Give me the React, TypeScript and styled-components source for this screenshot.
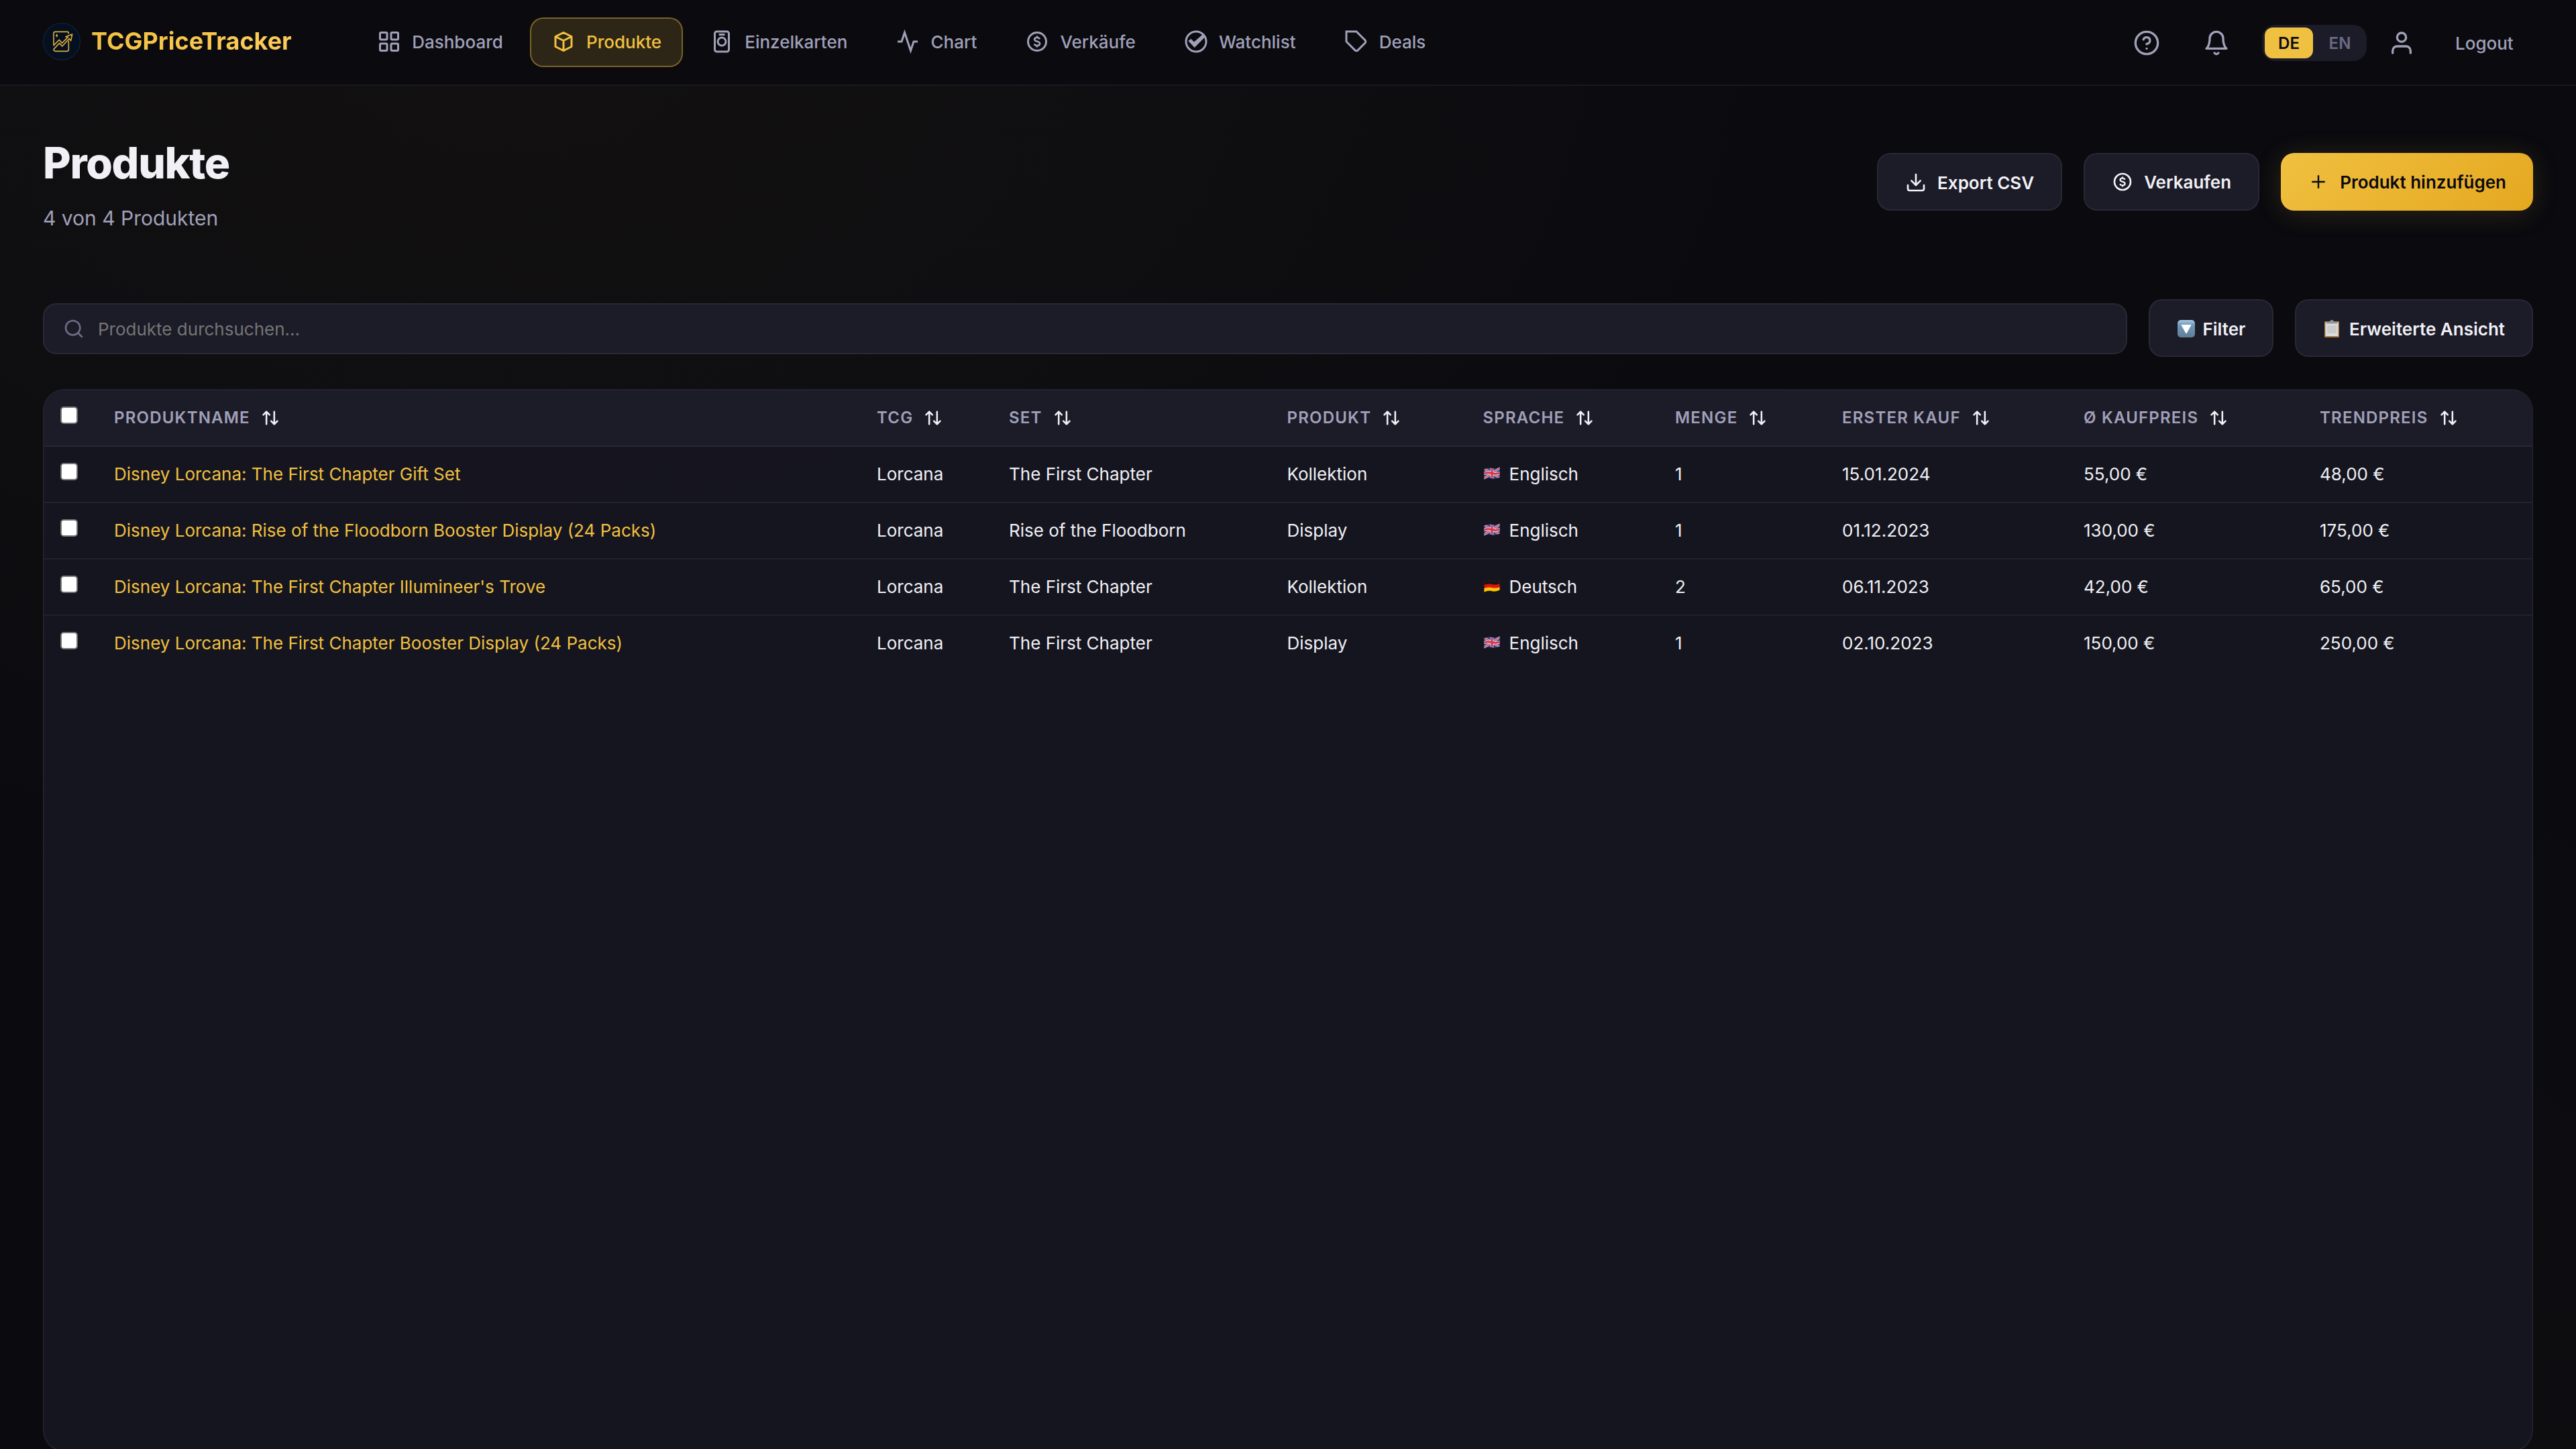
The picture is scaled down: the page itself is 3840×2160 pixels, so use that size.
import type { ReactNode } from "react";
import { createGlobalStyle, styled } from "styled-components";
import { FiActivity, FiBell, FiDownload, FiHelpCircle, FiSearch, FiUser } from "react-icons/fi";

const GlobalStyle = createGlobalStyle`
  * {
    box-sizing: border-box;
  }

  body {
    margin: 0;
    height: 100vh;
    overflow: hidden;
    font-family: Inter, "Liberation Sans", sans-serif;
    color: #f0f0f5;
    -webkit-font-smoothing: antialiased;
    background-color: #0a0a0f;
    background-image: radial-gradient(ellipse at 20% 0%, rgba(240, 192, 64, 0.04) 0%, transparent 50%),
      radial-gradient(ellipse at 80% 100%, rgba(240, 192, 64, 0.02) 0%, transparent 50%);
  }

  #root {
    height: 100%;
  }
`;

const Header = styled.header`
  display: flex;
  align-items: center;
  height: 128px;
  padding: 0 64px;
  background: rgba(10, 10, 15, 0.8);
  border-bottom: 2px solid rgba(255, 255, 255, 0.06);
`;

const Brand = styled.div`
  display: flex;
  align-items: center;
  gap: 16px;
  width: 466px;
  margin-top: -2px;
`;

const BrandLogo = styled.svg`
  width: 56px;
  height: 56px;
`;

const BrandName = styled.span`
  margin-top: -2px;
  font-size: 36px;
  font-weight: 700;
  color: transparent;
  background: linear-gradient(135deg, #f0c040, #ffcc5c);
  background-clip: text;
`;

const Nav = styled.nav`
  display: flex;
  gap: 8px;
`;

const NavItem = styled.a<{ $active?: boolean }>`
  display: flex;
  align-items: center;
  gap: 16.2px;
  height: 74px;
  padding: 0 30px 2px;
  font-size: 26px;
  font-weight: 500;
  border-radius: 20px;
  border: 2px solid ${({ $active }) => ($active ? "rgba(240, 192, 64, 0.4)" : "transparent")};
  background: ${({ $active }) => ($active ? "rgba(240, 192, 64, 0.15)" : "transparent")};
  color: ${({ $active }) => ($active ? "#f0c040" : "#a0a0b8")};

  svg {
    width: 36px;
    height: 36px;
  }
`;

const Actions = styled.div`
  display: flex;
  align-items: center;
  margin-left: auto;
  padding-top: 2px;
  color: #a0a0b8;
`;

const IconButton = styled.div<{ $width: number }>`
  display: flex;
  justify-content: center;
  width: ${({ $width }) => $width}px;

  svg {
    width: 40px;
    height: 40px;
  }
`;

const LangSwitch = styled.div`
  display: flex;
  gap: 4px;
  margin-left: 16px;
  padding: 4px;
  border-radius: 20px;
  background: #1c1b28;
`;

const Lang = styled.span<{ $active?: boolean }>`
  display: flex;
  align-items: center;
  justify-content: center;
  width: 72px;
  height: 46px;
  border-radius: 12px;
  font-size: 24px;
  font-weight: 600;
  background: ${({ $active }) => ($active ? "#f0c040" : "transparent")};
  color: ${({ $active }) => ($active ? "#0a0a0f" : "#6b6b85")};
`;

const Logout = styled.span`
  margin-left: 28px;
  padding-top: 1px;
  width: 116px;
  font-size: 26px;
  font-weight: 500;
`;

const Main = styled.main`
  padding: 0 64px;
`;

const PageHead = styled.div`
  display: flex;
  align-items: flex-start;
  justify-content: space-between;
  height: 318px;
  padding-top: 79px;
`;

const Title = styled.h1`
  margin: 0;
  font-size: 64px;
  line-height: 72px;
  font-weight: 800;
  letter-spacing: -0.02em;
`;

const Subtitle = styled.p`
  margin: 18px 0 0;
  font-size: 30px;
  line-height: 56px;
  color: #a0a0b8;
`;

const ButtonRow = styled.div`
  display: flex;
  gap: 32px;
  padding-top: 21px;
`;

const Button = styled.button<{ $primary?: boolean; $tight?: boolean; $low?: boolean }>`
  display: flex;
  align-items: center;
  gap: ${({ $tight }) => ($tight ? 6.6 : 16)}px;
  height: 86px;
  padding: ${({ $low }) => ($low ? "3px 40px 0" : "0 40px")};
  border-radius: 20px;
  border: ${({ $primary }) => ($primary ? "none" : "2px solid rgba(255, 255, 255, 0.06)")};
  background: ${({ $primary }) => ($primary ? "linear-gradient(135deg, #f0c040, #e5a820)" : "#1c1b28")};
  box-shadow: ${({ $primary }) => ($primary ? "0 4px 40px rgba(240, 192, 64, 0.15)" : "none")};
  color: ${({ $primary }) => ($primary ? "#0a0a0f" : "#f0f0f5")};
  font-family: inherit;
  font-size: 26px;
  font-weight: 600;
  white-space: nowrap;

  svg {
    flex: none;
    width: 32px;
    height: 32px;
    margin-top: ${({ $low }) => ($low ? -1 : 0)}px;
  }
`;

const Toolbar = styled.div`
  display: flex;
  align-items: center;
  gap: 32px;
`;

const SearchBox = styled.div`
  flex: 1;
  display: flex;
  align-items: center;
  gap: 20px;
  height: 76px;
  margin-top: 2px;
  padding: 0 28px;
  border-radius: 20px;
  border: 2px solid rgba(255, 255, 255, 0.06);
  background: #1c1b28;
  color: #6b6b85;

  svg {
    width: 32px;
    height: 32px;
  }
`;

const SearchInput = styled.input`
  flex: 1;
  padding: 0;
  border: none;
  outline: none;
  background: none;
  color: #f0f0f5;
  font-family: inherit;
  font-size: 26px;

  &::placeholder {
    color: #757575;
  }
`;

const Card = styled.section`
  margin-top: 48px;
  height: 1584px;
  overflow: hidden;
  border-radius: 32px;
  border: 2px solid rgba(255, 255, 255, 0.06);
  background: rgba(24, 24, 35, 0.8);
`;

const Table = styled.table`
  width: 100%;
  table-layout: fixed;
  border-collapse: separate;
  border-spacing: 0;
  font-size: 26px;
`;

const Th = styled.th<{ $width?: number }>`
  width: ${({ $width }) => ($width ? `${$width}px` : "auto")};
  height: 84px;
  padding: 0 24px 2px;
  text-align: left;
  font-size: 24px;
  font-weight: 600;
  letter-spacing: 0.05em;
  text-transform: uppercase;
  white-space: nowrap;
  color: #a0a0b8;
  background: #1c1b28;
  border-bottom: 2px solid rgba(255, 255, 255, 0.06);
`;

const Td = styled.td`
  height: 84px;
  padding: 0 24px 2px;
  white-space: nowrap;
  border-bottom: 2px solid rgba(255, 255, 255, 0.06);

  tr:last-child > & {
    border-bottom-color: transparent;
  }
`;

const ThLabel = styled.div`
  display: flex;
  align-items: center;
  gap: 16px;

  svg {
    width: 28px;
    height: 28px;
    margin-top: 2px;
    color: #f0f0f5;
  }
`;

const Check = styled.input.attrs({ type: "checkbox" })`
  appearance: none;
  display: block;
  width: 26px;
  height: 26px;
  margin: 0 0 6px;
  border: 2px solid #767676;
  border-radius: 5px;
  background: #fff;
`;

const ProductLink = styled.a`
  color: #f0c040;
`;

const Language = styled.span`
  display: flex;
  align-items: center;
  gap: 13px;
`;

const FlagIcon = styled.svg`
  width: 26px;
  height: 20px;
`;

const columns = [
  { label: "Produktname", width: 1137 },
  { label: "TCG", width: 197 },
  { label: "Set", width: 414.5 },
  { label: "Produkt", width: 292 },
  { label: "Sprache", width: 286.5 },
  { label: "Menge", width: 249 },
  { label: "Erster Kauf", width: 360 },
  { label: "Ø Kaufpreis", width: 352 },
  { label: "Trendpreis" },
];

const products = [
  {
    name: "Disney Lorcana: The First Chapter Gift Set",
    set: "The First Chapter",
    type: "Kollektion",
    language: "Englisch",
    amount: 1,
    bought: "15.01.2024",
    price: "55,00 €",
    trend: "48,00 €",
  },
  {
    name: "Disney Lorcana: Rise of the Floodborn Booster Display (24 Packs)",
    set: "Rise of the Floodborn",
    type: "Display",
    language: "Englisch",
    amount: 1,
    bought: "01.12.2023",
    price: "130,00 €",
    trend: "175,00 €",
  },
  {
    name: "Disney Lorcana: The First Chapter Illumineer's Trove",
    set: "The First Chapter",
    type: "Kollektion",
    language: "Deutsch",
    amount: 2,
    bought: "06.11.2023",
    price: "42,00 €",
    trend: "65,00 €",
  },
  {
    name: "Disney Lorcana: The First Chapter Booster Display (24 Packs)",
    set: "The First Chapter",
    type: "Display",
    language: "Englisch",
    amount: 1,
    bought: "02.10.2023",
    price: "150,00 €",
    trend: "250,00 €",
  },
];

const Icon = ({ children, stroke = 2 }: { children: ReactNode; stroke?: number }) => (
  <svg viewBox="0 0 24 24" fill="none" stroke="currentColor" strokeWidth={stroke}>
    {children}
  </svg>
);

const GridIcon = () => (
  <Icon>
    <rect x="3" y="3" width="7" height="7" rx="1" />
    <rect x="14" y="3" width="7" height="7" rx="1" />
    <rect x="3" y="14" width="7" height="7" rx="1" />
    <rect x="14" y="14" width="7" height="7" rx="1" />
  </Icon>
);

const CubeIcon = () => (
  <Icon>
    <path
      strokeLinecap="round"
      strokeLinejoin="round"
      d="M20 7l-8-4-8 4m16 0l-8 4m8-4v10l-8 4m0-10L4 7m8 4v10M4 7v10l8 4"
    />
  </Icon>
);

const CardIcon = () => (
  <Icon>
    <rect x="5" y="2" width="14" height="20" rx="2" />
    <path d="M9 5h6" />
    <circle cx="12" cy="12" r="4" />
  </Icon>
);

const CoinIcon = () => (
  <Icon>
    <circle cx="12" cy="12" r="9" />
    <path
      strokeWidth="1.7"
      d="M14.6 9.6c-.4-1-1.4-1.6-2.6-1.6-1.5 0-2.6.8-2.6 1.9 0 2.7 5.3 1.3 5.3 4.1 0 1.2-1.2 2-2.7 2-1.4 0-2.4-.6-2.8-1.7M12 6.3v2M12 15.6v2"
    />
  </Icon>
);

const CheckCircleIcon = () => (
  <Icon>
    <circle cx="12" cy="12" r="10" />
    <path
      stroke="none"
      fill="currentColor"
      d="M4.2 11.3 6.9 9.3 10 12.4 18.7 4.7 21.5 6.9 10.4 18z"
    />
  </Icon>
);

const TagIcon = () => (
  <Icon>
    <path d="M20.59 13.41l-7.17 7.17a2 2 0 0 1-2.83 0L2 12V2h10l8.59 8.59a2 2 0 0 1 0 2.82z" />
  </Icon>
);

const PlusIcon = () => (
  <Icon stroke={1.8}>
    <path d="M12 4.7v14.6M4.7 12h14.6" />
  </Icon>
);

const SortIcon = () => (
  <Icon stroke={2.2}>
    <path strokeLinecap="round" strokeLinejoin="round" d="M3 8l4-4 4 4M7 4v16M21 16l-4 4-4-4M17 20V4" />
  </Icon>
);

const Logo = () => (
  <BrandLogo viewBox="72 42 168 168" fill="none">
    <circle cx="156" cy="126" r="82" fill="#04101f" stroke="#12213a" strokeWidth="4" />
    <g stroke="#d9ab3c" strokeWidth="5" strokeLinejoin="round" strokeLinecap="round">
      <path d="M187 90v-2q0-6-6-6h-54q-7 0-7 7v54l25-25 12 15 27-27-10-2 29-11-6 29-7-9-32 34-12-14-26 27q0 9 8 9h51q8 0 8-8v-36" />
    </g>
    <path d="M134 91l5 8-5 8-5-8z" fill="#d9ab3c" />
  </BrandLogo>
);

const FilterEmoji = () => (
  <svg viewBox="2 0 32 32">
    <defs>
      <linearGradient id="filterFace" x1="0" y1="0" x2="0" y2="1">
        <stop offset="0" stopColor="#a9cbe2" />
        <stop offset="0.3" stopColor="#7097b8" />
        <stop offset="1" stopColor="#5f7e97" />
      </linearGradient>
    </defs>
    <rect x="3" y="3" width="26" height="26" rx="5" fill="url(#filterFace)" />
    <path d="M9 10.5h14L16 23z" fill="#fff" stroke="#fff" strokeLinejoin="round" />
  </svg>
);

const ClipboardEmoji = () => (
  <svg viewBox="3 0 32 32">
    <rect x="5" y="5" width="22" height="24" rx="1" fill="#a87838" />
    <rect x="6.5" y="6.5" width="19" height="20.5" fill="#dedede" />
    <rect x="9" y="11" width="14" height="12" fill="#cbcbcb" />
    <path d="M8 5.5h5q0-2.5 3-2.5t3 2.5h5v3H8z" fill="#8f9499" />
  </svg>
);

const waveShape = "M1.5 3.5q6-3 11.5-1.5t11.5-1.5v15q-6 3-11.5 1.5t-11.5 1.5z";

const Flag = ({ language }: { language: string }) =>
  language === "Deutsch" ? (
    <FlagIcon viewBox="0 0 26 20">
      <clipPath id="waveDe">
        <path d={waveShape} />
      </clipPath>
      <g clipPath="url(#waveDe)">
        <path d="M0 0h26v20H0z" fill="#e01111" />
        <path d="M0 0h26v5.5q-6 3-13 1.5T0 8.5z" fill="#151515" />
        <path d="M0 13.5q6-3 13-1.5t13-1.5V20H0z" fill="#f8c800" />
      </g>
    </FlagIcon>
  ) : (
    <FlagIcon viewBox="0 0 26 20">
      <clipPath id="waveEn">
        <path d={waveShape} />
      </clipPath>
      <g clipPath="url(#waveEn)">
        <path d="M0 0h26v20H0z" fill="#2a4a97" />
        <path d="M0 2l26 15M0 18L26 1" stroke="#e6e3ee" strokeWidth="3" />
        <path d="M0 2l26 15M0 18L26 1" stroke="#d63349" strokeWidth="1.4" />
        <path d="M13 0v20M0 10q6-2 13-.5T26 9" stroke="#e6e3ee" strokeWidth="4.6" fill="none" />
        <path d="M13 0v20M0 10q6-2 13-.5T26 9" stroke="#d63349" strokeWidth="3" fill="none" />
      </g>
    </FlagIcon>
  );

const App = () => {
  return (
    <>
      <GlobalStyle />
      <Header>
        <Brand>
          <Logo />
          <BrandName>TCGPriceTracker</BrandName>
        </Brand>
        <Nav>
          <NavItem>
            <GridIcon />
            Dashboard
          </NavItem>
          <NavItem $active>
            <CubeIcon />
            Produkte
          </NavItem>
          <NavItem>
            <CardIcon />
            Einzelkarten
          </NavItem>
          <NavItem>
            <FiActivity strokeLinecap="butt" strokeLinejoin="miter" />
            Chart
          </NavItem>
          <NavItem>
            <CoinIcon />
            Verkäufe
          </NavItem>
          <NavItem>
            <CheckCircleIcon />
            Watchlist
          </NavItem>
          <NavItem>
            <TagIcon />
            Deals
          </NavItem>
        </Nav>
        <Actions>
          <IconButton $width={104}>
            <FiHelpCircle />
          </IconButton>
          <IconButton $width={104}>
            <FiBell />
          </IconButton>
          <LangSwitch>
            <Lang $active>DE</Lang>
            <Lang>EN</Lang>
          </LangSwitch>
          <IconButton $width={104}>
            <FiUser />
          </IconButton>
          <Logout>Logout</Logout>
        </Actions>
      </Header>
      <Main>
        <PageHead>
          <div>
            <Title>Produkte</Title>
            <Subtitle>4 von 4 Produkten</Subtitle>
          </div>
          <ButtonRow>
            <Button $low>
              <FiDownload />
              Export CSV
            </Button>
            <Button>
              <CoinIcon />
              Verkaufen
            </Button>
            <Button $primary>
              <PlusIcon />
              Produkt hinzufügen
            </Button>
          </ButtonRow>
        </PageHead>
        <Toolbar>
          <SearchBox>
            <FiSearch />
            <SearchInput placeholder="Produkte durchsuchen..." />
          </SearchBox>
          <Button $tight $low>
            <FilterEmoji />
            Filter
          </Button>
          <Button $tight $low>
            <ClipboardEmoji />
            Erweiterte Ansicht
          </Button>
        </Toolbar>
        <Card>
          <Table>
            <thead>
              <tr>
                <Th $width={80}>
                  <Check />
                </Th>
                {columns.map(({ label, width }) => (
                  <Th key={label} $width={width}>
                    <ThLabel>
                      {label}
                      <SortIcon />
                    </ThLabel>
                  </Th>
                ))}
              </tr>
            </thead>
            <tbody>
              {products.map((item) => (
                <tr key={item.name}>
                  <Td>
                    <Check />
                  </Td>
                  <Td>
                    <ProductLink>{item.name}</ProductLink>
                  </Td>
                  <Td>Lorcana</Td>
                  <Td>{item.set}</Td>
                  <Td>{item.type}</Td>
                  <Td>
                    <Language>
                      <Flag language={item.language} />
                      {item.language}
                    </Language>
                  </Td>
                  <Td>{item.amount}</Td>
                  <Td>{item.bought}</Td>
                  <Td>{item.price}</Td>
                  <Td>{item.trend}</Td>
                </tr>
              ))}
            </tbody>
          </Table>
        </Card>
      </Main>
    </>
  );
};

export default App;
